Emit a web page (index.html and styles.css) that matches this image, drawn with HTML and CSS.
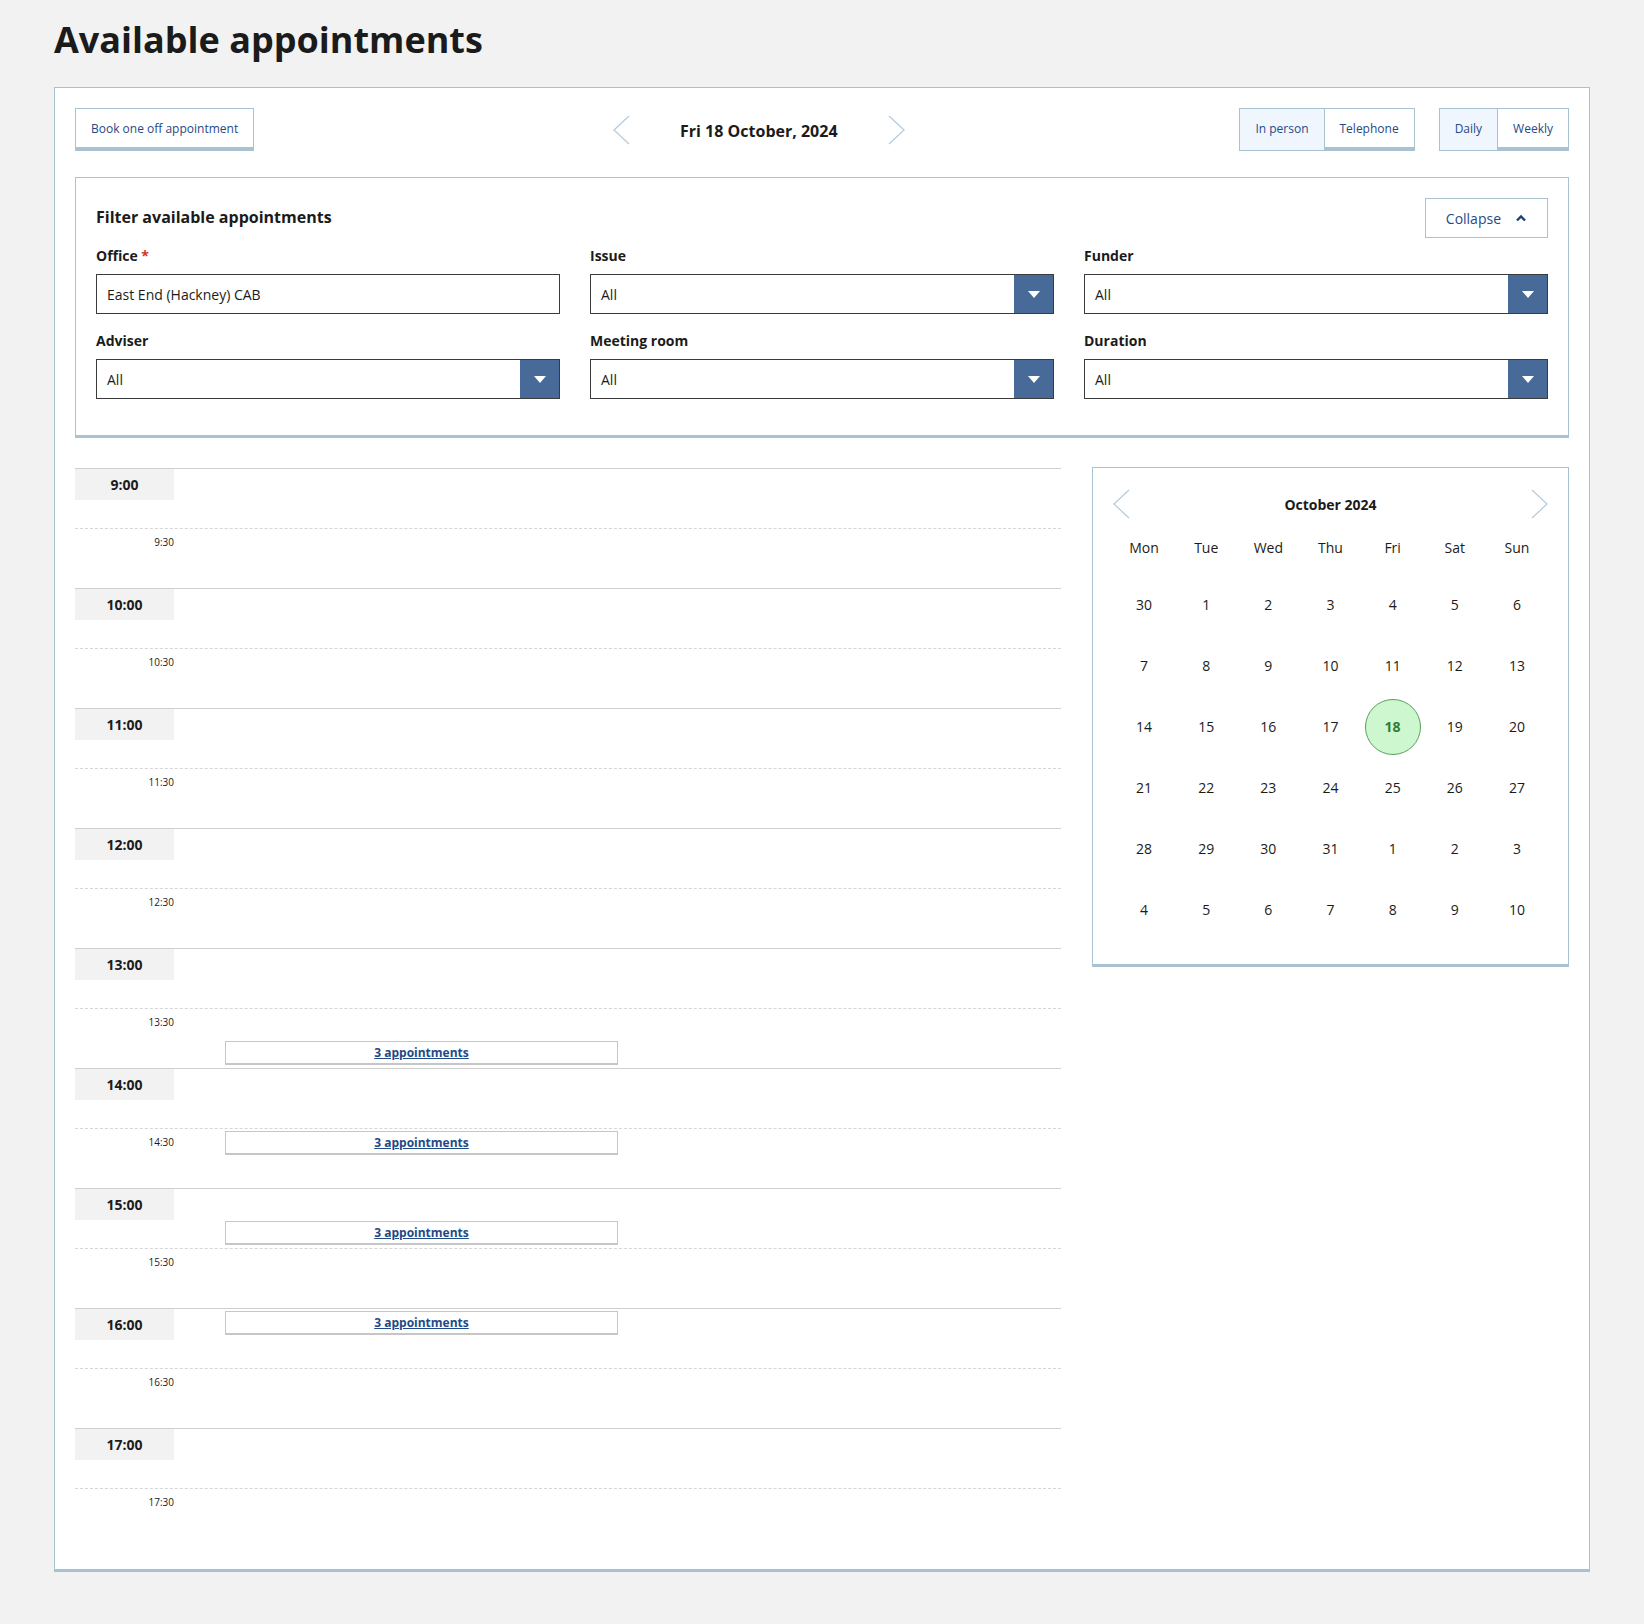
FILE: index.html
```html
<!DOCTYPE html>
<html lang="en">
<head>
<meta charset="utf-8">
<title>Available appointments</title>
<link rel="stylesheet" href="styles.css">
</head>
<body>
<h1 class="page-title">Available appointments</h1>
<div class="card">
  <div class="toolbar">
    <button class="btn">Book one off appointment</button>
    <div class="date-nav">
      <button class="chev" aria-label="Previous day"><svg width="17" height="30" viewBox="0 0 17 30"><polyline points="16,1 1,15 16,29" fill="none" stroke="#b9ccdb" stroke-width="1.3"/></svg></button>
      <span class="date-text">Fri 18 October, 2024</span>
      <button class="chev" aria-label="Next day"><svg width="17" height="30" viewBox="0 0 17 30"><polyline points="1,1 16,15 1,29" fill="none" stroke="#b9ccdb" stroke-width="1.3"/></svg></button>
    </div>
    <div class="toggles">
      <div class="seg">
        <button class="seg-btn active">In person</button>
        <button class="seg-btn">Telephone</button>
      </div>
      <div class="seg">
        <button class="seg-btn active">Daily</button>
        <button class="seg-btn">Weekly</button>
      </div>
    </div>
  </div>

  <section class="filter">
    <div class="filter-head">
      <h2 class="filter-title">Filter available appointments</h2>
      <button class="collapse">Collapse <svg width="12" height="8" viewBox="0 0 12 8"><polyline points="2,6.5 6,2.5 10,6.5" fill="none" stroke="#1f3f73" stroke-width="2.4"/></svg></button>
    </div>
    <div class="fields">
      <div class="field">
        <label class="label">Office <span class="req">*</span></label>
        <div class="input">East End (Hackney) CAB</div>
      </div>
      <div class="field">
        <label class="label">Issue</label>
        <div class="select"><span class="val">All</span><span class="arrow"><svg width="12" height="7" viewBox="0 0 12 7"><polygon points="0,0 12,0 6,7" fill="#fff"/></svg></span></div>
      </div>
      <div class="field">
        <label class="label">Funder</label>
        <div class="select"><span class="val">All</span><span class="arrow"><svg width="12" height="7" viewBox="0 0 12 7"><polygon points="0,0 12,0 6,7" fill="#fff"/></svg></span></div>
      </div>
      <div class="field">
        <label class="label">Adviser</label>
        <div class="select"><span class="val">All</span><span class="arrow"><svg width="12" height="7" viewBox="0 0 12 7"><polygon points="0,0 12,0 6,7" fill="#fff"/></svg></span></div>
      </div>
      <div class="field">
        <label class="label">Meeting room</label>
        <div class="select"><span class="val">All</span><span class="arrow"><svg width="12" height="7" viewBox="0 0 12 7"><polygon points="0,0 12,0 6,7" fill="#fff"/></svg></span></div>
      </div>
      <div class="field">
        <label class="label">Duration</label>
        <div class="select"><span class="val">All</span><span class="arrow"><svg width="12" height="7" viewBox="0 0 12 7"><polygon points="0,0 12,0 6,7" fill="#fff"/></svg></span></div>
      </div>
    </div>
  </section>

  <div class="main">
    <div class="schedule">
      <div class="hour"><div class="half"><span class="hour-label">9:00</span></div><div class="half dashed"><span class="half-label">9:30</span></div></div>
      <div class="hour"><div class="half"><span class="hour-label">10:00</span></div><div class="half dashed"><span class="half-label">10:30</span></div></div>
      <div class="hour"><div class="half"><span class="hour-label">11:00</span></div><div class="half dashed"><span class="half-label">11:30</span></div></div>
      <div class="hour"><div class="half"><span class="hour-label">12:00</span></div><div class="half dashed"><span class="half-label">12:30</span></div></div>
      <div class="hour"><div class="half"><span class="hour-label">13:00</span></div><div class="half dashed"><span class="half-label">13:30</span></div></div>
      <div class="hour"><div class="half"><span class="hour-label">14:00</span></div><div class="half dashed"><span class="half-label">14:30</span></div></div>
      <div class="hour"><div class="half"><span class="hour-label">15:00</span></div><div class="half dashed"><span class="half-label">15:30</span></div></div>
      <div class="hour"><div class="half"><span class="hour-label">16:00</span></div><div class="half dashed"><span class="half-label">16:30</span></div></div>
      <div class="hour"><div class="half"><span class="hour-label">17:00</span></div><div class="half dashed"><span class="half-label">17:30</span></div></div>

      <div class="appt" style="top: 573px;"><a href="#">3 appointments</a></div>
      <div class="appt" style="top: 663px;"><a href="#">3 appointments</a></div>
      <div class="appt" style="top: 753px;"><a href="#">3 appointments</a></div>
      <div class="appt" style="top: 843px;"><a href="#">3 appointments</a></div>
    </div>

    <div class="calendar">
      <div class="cal-head">
        <button class="chev" aria-label="Previous month"><svg width="17" height="30" viewBox="0 0 17 30"><polyline points="16,1 1,15 16,29" fill="none" stroke="#b9ccdb" stroke-width="1.3"/></svg></button>
        <span class="cal-title">October 2024</span>
        <button class="chev" aria-label="Next month"><svg width="17" height="30" viewBox="0 0 17 30"><polyline points="1,1 16,15 1,29" fill="none" stroke="#b9ccdb" stroke-width="1.3"/></svg></button>
      </div>
      <div class="cal-weekdays">
        <span>Mon</span><span>Tue</span><span>Wed</span><span>Thu</span><span>Fri</span><span>Sat</span><span>Sun</span>
      </div>
      <div class="cal-days">
        <span class="day">30</span><span class="day">1</span><span class="day">2</span><span class="day">3</span><span class="day">4</span><span class="day">5</span><span class="day">6</span>
        <span class="day">7</span><span class="day">8</span><span class="day">9</span><span class="day">10</span><span class="day">11</span><span class="day">12</span><span class="day">13</span>
        <span class="day">14</span><span class="day">15</span><span class="day">16</span><span class="day">17</span><span class="day selected">18</span><span class="day">19</span><span class="day">20</span>
        <span class="day">21</span><span class="day">22</span><span class="day">23</span><span class="day">24</span><span class="day">25</span><span class="day">26</span><span class="day">27</span>
        <span class="day">28</span><span class="day">29</span><span class="day">30</span><span class="day">31</span><span class="day">1</span><span class="day">2</span><span class="day">3</span>
        <span class="day">4</span><span class="day">5</span><span class="day">6</span><span class="day">7</span><span class="day">8</span><span class="day">9</span><span class="day">10</span>
      </div>
    </div>
  </div>
</div>
</body>
</html>
```

FILE: styles.css
```css
* { box-sizing: border-box; }

html, body {
  margin: 0;
  background: #f2f2f2;
}

body {
  padding: 14px 54px 40px;
  font-family: "Open Sans", "Noto Sans", "Liberation Sans", sans-serif;
  color: #1b1b1b;
}

button {
  font-family: inherit;
  background: none;
  border: 0;
  padding: 0;
  cursor: pointer;
}

.page-title {
  margin: 0 0 21px;
  font-size: 36px;
  line-height: 52px;
  font-weight: 700;
  color: #1b1b1b;
}

.card {
  background: #fff;
  border: 1px solid #a9c2d1;
  border-bottom-width: 3px;
  padding: 20px 20px 21px;
}

/* toolbar */
.toolbar {
  display: flex;
  align-items: center;
  justify-content: space-between;
  height: 43px;
}

.btn {
  height: 43px;
  padding: 0 15px;
  background: #fff;
  border: 1px solid #a9c2d1;
  border-bottom-width: 4px;
  font-size: 12px;
  color: #1f4a87;
}

.date-nav {
  display: flex;
  align-items: center;
  gap: 50px;
  margin-left: 24px;
}

.chev {
  display: flex;
  width: 17px;
  height: 30px;
}

.date-text {
  font-size: 16px;
  font-weight: 700;
  color: #1b1b1b;
  padding-top: 3px;
}

.toggles {
  display: flex;
  gap: 24px;
}

.seg {
  display: flex;
  border: 1px solid #a9c2d1;
  height: 43px;
}

.seg-btn {
  height: 100%;
  padding: 0 15px;
  font-size: 12px;
  color: #1f4a87;
  background: #fff;
  border-bottom: 3px solid #a9c2d1;
}

.seg-btn + .seg-btn {
  border-left: 1px solid #a9c2d1;
}

.seg-btn.active {
  background: #f0f6fd;
  border-bottom-color: transparent;
}

/* filter */
.filter {
  margin-top: 26px;
  border: 1px solid #a9c2d1;
  border-bottom-width: 3px;
  padding: 19px 20px 36px;
}

.filter-head {
  display: flex;
  align-items: center;
  justify-content: space-between;
  height: 40px;
  margin-top: 1px;
}

.filter-title {
  margin: -2px 0 0;
  font-size: 16px;
  font-weight: 700;
  color: #1b1b1b;
}

.collapse {
  display: flex;
  align-items: center;
  gap: 14px;
  height: 40px;
  padding: 0 20px;
  border: 1px solid #a9c2d1;
  font-size: 14px;
  color: #1f4a87;
}

.fields {
  margin-top: 8px;
  display: grid;
  grid-template-columns: repeat(3, 1fr);
  column-gap: 30px;
  row-gap: 17px;
}

.label {
  display: block;
  font-size: 14px;
  font-weight: 700;
  line-height: 20px;
  margin-bottom: 8px;
}

.req { color: #d4351c; }

.input, .select {
  height: 40px;
  border: 1px solid #3b3b3b;
  font-size: 14px;
  color: #1b1b1b;
  display: flex;
  align-items: center;
}

.input { padding-left: 10px; }

.select .val {
  flex: 1;
  padding-left: 10px;
}

.select .arrow {
  width: 39px;
  height: 100%;
  background: #476a98;
  display: flex;
  align-items: center;
  justify-content: center;
}

/* main area */
.main {
  margin-top: 30px;
  display: grid;
  grid-template-columns: 1fr 477px;
  column-gap: 31px;
  align-items: start;
}

.schedule {
  position: relative;
}

.hour {
  border-top: 1px solid #cfcfcf;
}

.half {
  height: 60px;
  position: relative;
}

.hour > .half:first-child { height: 59px; }

.half.dashed {
  border-top: 1px dashed #d6d6d6;
}

.hour-label {
  display: block;
  width: 99px;
  height: 31px;
  padding-top: 2px;
  background: #f2f2f2;
  font-size: 14px;
  font-weight: 700;
  line-height: 28px;
  text-align: center;
}

.half-label {
  display: block;
  width: 99px;
  text-align: right;
  font-size: 10px;
  line-height: 14px;
  padding-top: 6px;
  color: #1b1b1b;
}

.appt {
  position: absolute;
  left: 150px;
  width: 393px;
  height: 24px;
  background: #fff;
  border: 1px solid #c6c6c6;
  border-bottom-width: 2px;
  text-align: center;
  font-size: 12px;
  line-height: 21px;
  z-index: 1;
}

.appt a {
  color: #1f4a87;
  font-weight: 700;
  text-decoration: underline;
}

/* calendar */
.calendar {
  margin-top: -1px;
  border: 1px solid #a9c2d1;
  border-bottom-width: 3px;
  padding: 20px 20px 24px;
}

.cal-head {
  display: flex;
  align-items: center;
  justify-content: space-between;
  height: 32px;
  margin-bottom: 13px;
}

.cal-title {
  font-size: 14px;
  font-weight: 700;
}

.cal-weekdays, .cal-days {
  display: grid;
  grid-template-columns: repeat(7, 1fr);
  text-align: center;
  font-size: 14px;
}

.cal-weekdays {
  height: 29px;
  line-height: 29px;
  margin-bottom: 12px;
}

.cal-days {
  grid-auto-rows: 61px;
}

.day {
  display: flex;
  align-items: center;
  justify-content: center;
}

.day.selected {
  width: 56px;
  height: 56px;
  margin: auto;
  border-radius: 50%;
  background: #ccf7cf;
  border: 1px solid #5c9f5c;
  color: #2f7d34;
  font-weight: 700;
}
```
